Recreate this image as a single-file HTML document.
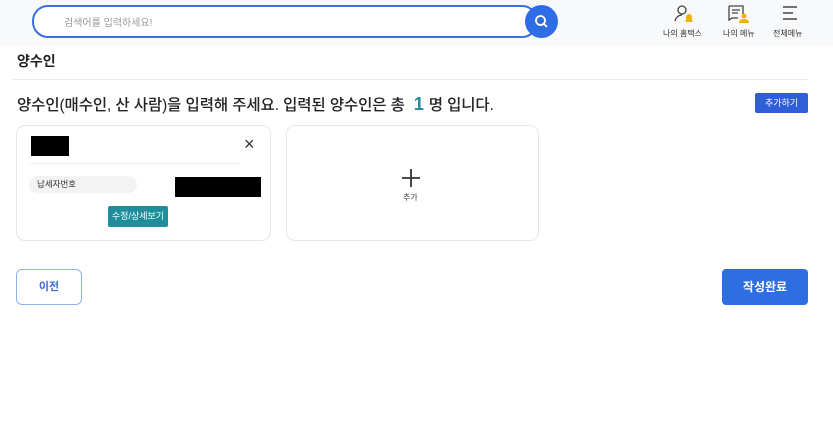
<!DOCTYPE html>
<html><head><meta charset="utf-8"><style>
*{margin:0;padding:0;box-sizing:border-box}
body{width:833px;height:434px;background:#fff;font-family:"Liberation Sans","Noto Sans CJK KR",sans-serif;position:relative;overflow:hidden;color:#222}
.a{position:absolute}
</style></head><body>
<div class="a" style="left:0;top:0;width:833px;height:46px;background:#f8f9fb"></div>
<div class="a" style="left:32px;top:5px;width:506px;height:33px;border:2px solid #3a6fe2;border-radius:16px;background:#fff"></div>
<div class="a" style="left:64px;top:14px;font-size:10px;color:#999">검색어를 입력하세요!</div>
<div class="a" style="left:525px;top:5px;width:33px;height:33px;border-radius:50%;background:#2f6de6"></div>
<svg class="a" style="left:533px;top:13px" width="17" height="17" viewBox="0 0 17 17"><circle cx="7.5" cy="7.5" r="4.5" stroke="#fff" stroke-width="1.8" fill="none"/><path d="M11 11l3 3" stroke="#fff" stroke-width="1.8"/></svg>
<svg class="a" style="left:672px;top:4px" width="24" height="20" viewBox="0 0 24 20"><circle cx="10" cy="6" r="4" fill="none" stroke="#444" stroke-width="1.3"/><path d="M3 17c1-4 4-6 7-6" fill="none" stroke="#444" stroke-width="1.3"/><path d="M13 18h8l-1-2v-3a3 3 0 0 0-6 0v3z" fill="#f0b400"/></svg>
<svg class="a" style="left:727px;top:4px" width="24" height="20" viewBox="0 0 24 20"><path d="M2 2h14v9M2 2v14l3-2h6" fill="none" stroke="#444" stroke-width="1.3"/><path d="M5 6h8M5 9h6" stroke="#444" stroke-width="1.2"/><circle cx="17" cy="12" r="2.5" fill="#f0b400"/><path d="M12 19c0-3 2-4 5-4s5 1 5 4z" fill="#f0b400"/></svg>
<svg class="a" style="left:781px;top:5px" width="18" height="16" viewBox="0 0 18 16"><path d="M2 2h14M2 8h10M2 14h14" stroke="#444" stroke-width="1.4"/></svg>
<div class="a" style="left:663px;top:28px;font-size:8px;color:#333">나의 홈택스</div>
<div class="a" style="left:723px;top:28px;font-size:8px;color:#333">나의 메뉴</div>
<div class="a" style="left:773px;top:28px;font-size:8px;color:#333">전체메뉴</div>
<div class="a" style="left:17px;top:51px;font-size:14px;font-weight:bold">양수인</div>
<div class="a" style="left:12px;top:79px;width:796px;height:1px;background:#eee"></div>
<div class="a" style="left:17px;top:93px;font-size:15.5px;color:#222;font-weight:500;letter-spacing:-0.1px">양수인(매수인, 산 사람)을 입력해 주세요. 입력된 양수인은 총 <b style="color:#1f8a98;font-size:18px">&nbsp;1&nbsp;</b>명 입니다.</div>
<div class="a" style="left:755px;top:93px;width:53px;height:20px;background:#2f5fd6;border-radius:2px;color:#fff;font-size:9px;text-align:center;line-height:20px">추가하기</div>
<div class="a" style="left:16px;top:125px;width:255px;height:116px;border:1px solid #e6e6e6;border-radius:9px"></div>
<div class="a" style="left:31px;top:136px;width:38px;height:20px;background:#000"></div>
<div class="a" style="left:244px;top:134px;font-size:18px;color:#333">×</div>
<div class="a" style="left:30px;top:163px;width:210px;height:1px;background:#eee"></div>
<div class="a" style="left:29px;top:176px;width:108px;height:17px;background:#f3f3f3;border-radius:9px;font-size:8.5px;line-height:17px;padding-left:8px;color:#333">납세자번호</div>
<div class="a" style="left:175px;top:177px;width:86px;height:20px;background:#000"></div>
<div class="a" style="left:108px;top:206px;width:60px;height:21px;background:#1e8e9a;border-radius:2px;color:#fff;font-size:9px;text-align:center;line-height:21px">수정/상세보기</div>
<div class="a" style="left:286px;top:125px;width:253px;height:116px;border:1px solid #e6e6e6;border-radius:9px"></div>
<svg class="a" style="left:401px;top:168px" width="20" height="20" viewBox="0 0 20 20"><path d="M10 1v18M1 10h18" stroke="#333" stroke-width="1.8"/></svg>
<div class="a" style="left:403px;top:192px;font-size:8px;color:#444">추가</div>
<div class="a" style="left:16px;top:269px;width:66px;height:36px;border:1px solid #8fb0ee;border-radius:6px;color:#3a6bd8;font-size:11px;font-weight:bold;text-align:center;line-height:34px">이전</div>
<div class="a" style="left:722px;top:269px;width:86px;height:36px;background:#2e6ee3;border-radius:4px;color:#fff;font-size:12px;font-weight:bold;text-align:center;line-height:36px">작성완료</div>
</body></html>
